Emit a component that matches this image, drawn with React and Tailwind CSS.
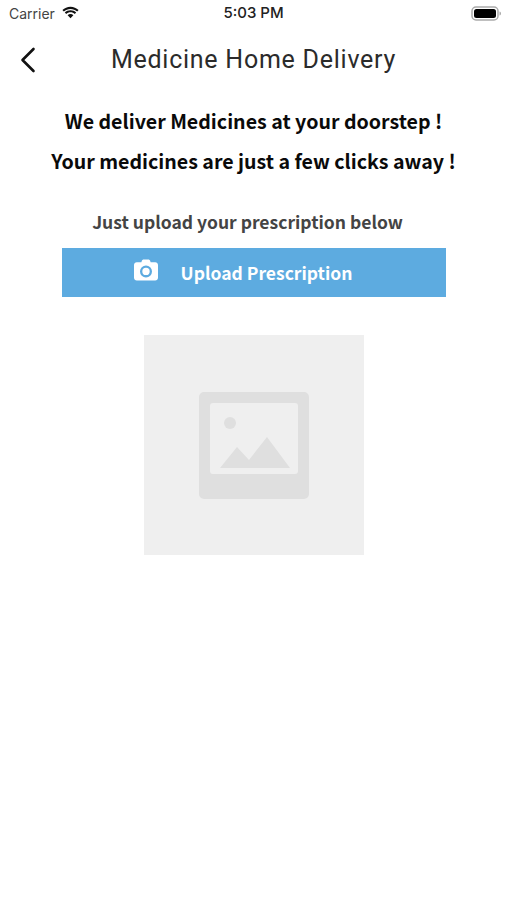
export default function App() {
  return (
    <div className="w-[507px] h-[900px] bg-white flex flex-col overflow-hidden">
      <div className="h-[27px] flex items-center justify-between pl-[9px] pr-[6px] font-['Inter',sans-serif]">
        <div className="flex-1 flex items-center gap-[7px] text-[14px] text-[#444]">
          <span>Carrier</span>
          <svg width="19" height="15" viewBox="0 0 20 14" fill="#111" className="-mt-[3px] -ml-[1px]">
            <path d="M10 3.2c2.7 0 5.2 1 7 2.8l1.5-1.6C16.300 2.200 13.300 .9 10 .9S3.700 2.200 1.500 4.400L3 6c1.800-1.800 4.300-2.800 7-2.800z" />
            <path d="M10 6.700c1.700 0 3.300.7 4.500 1.800l1.500-1.600C14.400 5.400 12.300 4.500 10 4.500S5.600 5.400 4 6.900l1.500 1.600C6.700 7.400 8.300 6.700 10 6.700z" />
            <path d="M10 8.600c-1.200 0-2.200.4-3 1.200l3 3.200 3-3.200c-.8-.8-1.800-1.200-3-1.200z" />
          </svg>
        </div>
        <span className="text-[15px] font-medium text-[#222] mr-[3px]">5:03 PM</span>
        <div className="flex-1 flex justify-end">
          <svg width="30" height="15" viewBox="0 0 30 15">
            <rect x="1" y="1" width="26" height="13" rx="4" fill="none" stroke="#aaa" strokeWidth="1.500" />
            <rect x="3" y="3" width="22" height="9" rx="2.500" fill="#000" />
            <path d="M28.500 5.500c1 .3 1.500 1 1.500 2s-.5 1.700-1.500 2z" fill="#aaa" />
          </svg>
        </div>
      </div>
      <div className="h-[64px] relative flex items-center justify-center">
        <svg width="16" height="26" viewBox="0 0 16 26" fill="none" stroke="#111" strokeWidth="2.600" strokeLinecap="round" strokeLinejoin="round" className="absolute left-[20px] top-[20px]">
          <path d="M13.500 2 2.500 13l11 11" />
        </svg>
        <h1 className="font-['Roboto',sans-serif] text-[25px] leading-[32px] tracking-[0.75px] text-[#2b2b2b] pt-[1px]">Medicine Home Delivery</h1>
      </div>
      <div className="flex flex-col items-center font-['Noto_Sans_CJK_JP',sans-serif] font-bold">
        <p className="text-[19.600px] leading-[30px] text-[#0a0a0a] mt-[15px]">We deliver Medicines at your doorstep !</p>
        <p className="text-[19.600px] leading-[30px] text-[#0a0a0a] mt-[10px]">Your medicines are just a few clicks away !</p>
        <p className="text-[17.500px] leading-[26px] text-[#444] mt-[33px] mr-[12px]">Just upload your prescription below</p>
        <div className="w-[384px] h-[49px] mt-[13px] bg-[#5dabe0] flex items-center justify-center text-white pr-[21px]">
          <svg width="24" height="22" viewBox="0 0 26 23" className="mr-[23px] -mt-[5px]">
            <path fillRule="evenodd" fill="#fff" d="M8.500 1.500C8.800.600 9.500 0 10.500 0h5c1 0 1.700.600 2 1.500L18 3h5c1.700 0 3 1.300 3 3v14c0 1.700-1.300 3-3 3H3c-1.700 0-3-1.300-3-3V6c0-1.700 1.300-3 3-3h5zM13 6.500a6.500 6.500 0 1 0 0 13 6.500 6.500 0 0 0 0-13zm0 2.500a4 4 0 1 1 0 8 4 4 0 0 1 0-8z" />
          </svg>
          <span className="text-[17.500px] leading-[26px]">Upload Prescription</span>
        </div>
        <div className="w-[220px] h-[220px] mt-[38px] bg-[#efefef] flex items-center justify-center">
          <svg width="110" height="107" viewBox="0 0 110 107" className="mt-[1px]">
            <path fillRule="evenodd" fill="#dfdfdf" d="M5 0h100a5 5 0 0 1 5 5v97a5 5 0 0 1-5 5H5a5 5 0 0 1-5-5V5a5 5 0 0 1 5-5zM14 11a3 3 0 0 0-3 3v65a3 3 0 0 0 3 3h82a3 3 0 0 0 3-3V14a3 3 0 0 0-3-3z" />
            <circle cx="31" cy="31" r="6" fill="#dfdfdf" />
            <path fill="#dfdfdf" d="M21 76 38 55l12 13 18-23 23 31z" />
          </svg>
        </div>
      </div>
    </div>
  );
}
